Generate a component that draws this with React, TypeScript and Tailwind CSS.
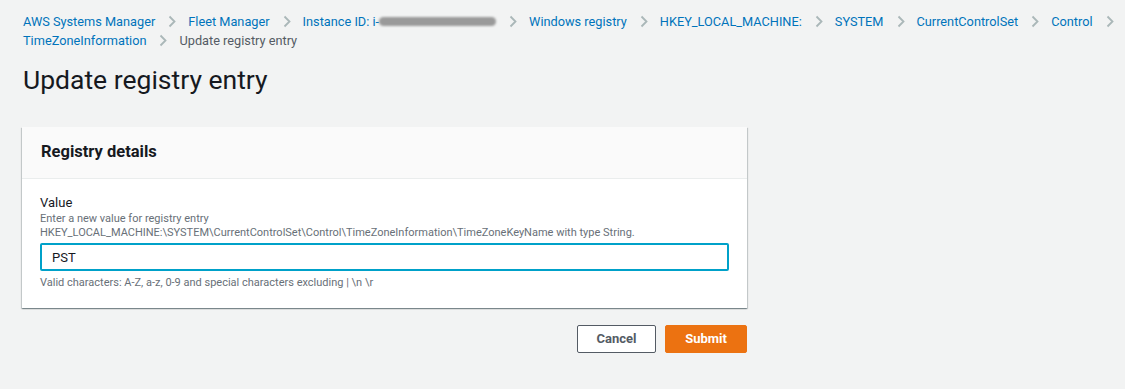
const crumbs = [
  "AWS Systems Manager",
  "Fleet Manager",
  "INSTANCE",
  "Windows registry",
  "HKEY_LOCAL_MACHINE:",
  "SYSTEM",
  "CurrentControlSet",
  "Control",
  "TimeZoneInformation",
];

function Sep() {
  return (
    <span className="inline-flex items-center ml-[13px] text-[#aab7b8]" aria-hidden>
      <svg width="8" height="13" viewBox="0 0 8 13" fill="none">
        <polyline points="1.5,1.5 6.5,6.5 1.5,11.5" stroke="currentColor" strokeWidth="1.8" />
      </svg>
    </span>
  );
}

export default function App() {
  return (
    <div
      className="min-h-[389px] w-[1125px] bg-[#f2f3f3] text-[#16191f] pl-[22px] pr-[4px] pt-[12px]"
      style={{ fontFamily: 'Roboto, "Open Sans", "Liberation Sans", sans-serif' }}
    >
      <nav className="flex flex-wrap items-center gap-x-[12px] text-[12.75px] leading-[19px] ml-px" aria-label="Breadcrumbs">
        {crumbs.map((c) => (
          <span key={c} className="inline-flex items-center">
            {c === "INSTANCE" ? (
              <span className="inline-flex items-center text-[#0073bb]">
                Instance ID: i-
                <span className="inline-block w-[117px] h-[9px] rounded-full bg-[#9a9a9a] blur-[1px]" />
              </span>
            ) : (
              <span className="text-[#0073bb]">{c}</span>
            )}
            <Sep />
          </span>
        ))}
        <span className="text-[#545b64]">Update registry entry</span>
      </nav>

      <h1 className="text-[26.5px] leading-[34px] font-normal mt-[13px] ml-px text-[#16191f]">
        Update registry entry
      </h1>

      <section className="mt-[30px] w-[725px] bg-white shadow-[0_1px_1px_0_rgba(0,28,36,0.3),1px_1px_1px_0_rgba(0,28,36,0.15),-1px_1px_1px_0_rgba(0,28,36,0.15)]">
        <div className="h-[52px] bg-[#fafafa] border-b border-[#eaeded] flex items-center px-[19px]">
          <h2 className="text-[16.5px] font-bold text-[#16191f]">Registry details</h2>
        </div>
        <div className="px-[18px] pt-[16px] pb-[18px]">
          <div className="text-[13px] leading-[16px] text-[#16191f]">Value</div>
          <div className="text-[11px] leading-[14px] text-[#687078] mt-[1px]">
            Enter a new value for registry entry
            <br />
            HKEY_LOCAL_MACHINE:\SYSTEM\CurrentControlSet\Control\TimeZoneInformation\TimeZoneKeyName with type String.
          </div>
          <input
            defaultValue="PST"
            className="mt-[3px] w-[689px] h-[28px] border-2 border-[#00a1c9] rounded-[2px] px-[10px] text-[13px] text-[#16191f] outline-none bg-white"
          />
          <div className="text-[11px] leading-[14px] text-[#687078] mt-[5px]">
            Valid characters: A-Z, a-z, 0-9 and special characters excluding | \n \r
          </div>
        </div>
      </section>

      <div className="w-[725px] flex justify-end gap-[9px] mt-[17px]">
        <button className="h-[28px] w-[79px] border border-[#545b64] rounded-[2px] bg-white text-[13px] font-bold text-[#545b64]">
          Cancel
        </button>
        <button className="h-[28px] w-[82px] rounded-[2px] bg-[#ec7211] border border-[#ec7211] text-[13px] font-bold text-white">
          Submit
        </button>
      </div>
    </div>
  );
}
